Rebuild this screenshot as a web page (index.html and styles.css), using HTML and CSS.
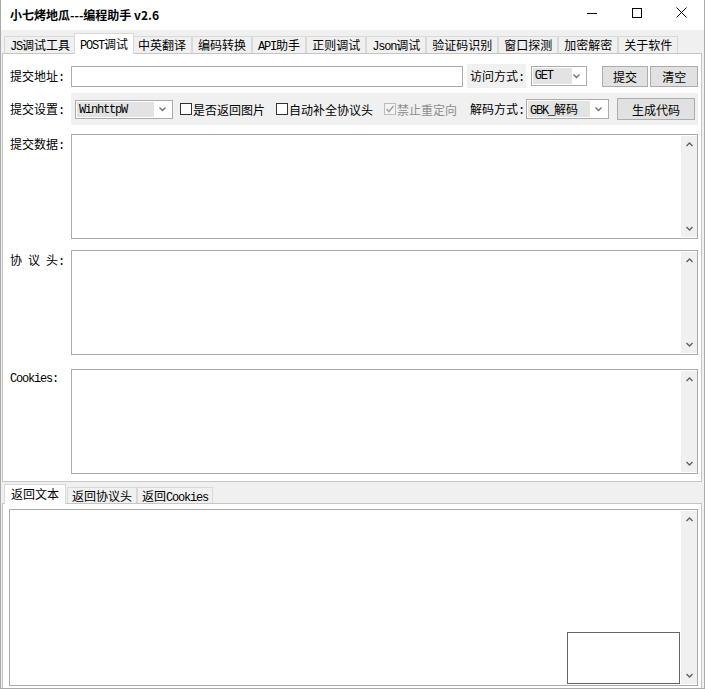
FILE: index.html
```html
<!DOCTYPE html>
<html lang="zh-CN">
<head>
    <meta charset="UTF-8">
    <title>小七烤地瓜---编程助手 v2.6</title>
    <link rel="stylesheet" href="styles.css">
</head>
<body>
<div class="window">
    <div class="titlebar">
        <div class="title">小七烤地瓜---编程助手 v2.6</div>
        <div class="controls">
            <div class="ctl"><svg width="10" height="10"><line x1="0" y1="5.5" x2="10" y2="5.5" stroke="#000"/></svg></div>
            <div class="ctl"><svg width="10" height="10"><rect x="0.5" y="0.5" width="9" height="9" fill="none" stroke="#000"/></svg></div>
            <div class="ctl"><svg width="11" height="11"><path d="M0.5 0.5 L10.5 10.5 M10.5 0.5 L0.5 10.5" stroke="#000"/></svg></div>
        </div>
    </div>

    <div class="tabs">
        <div class="tab"><span class="en">JS</span>调试工具</div>
        <div class="tab on"><span class="en">POST</span>调试</div>
        <div class="tab">中英翻译</div>
        <div class="tab">编码转换</div>
        <div class="tab"><span class="en">API</span>助手</div>
        <div class="tab">正则调试</div>
        <div class="tab"><span class="en">Json</span>调试</div>
        <div class="tab">验证码识别</div>
        <div class="tab">窗口探测</div>
        <div class="tab">加密解密</div>
        <div class="tab">关于软件</div>
    </div>

    <div class="panel main">
        <div class="row url-row">
            <div class="lbl">提交地址<span class="en">:</span></div>
            <div class="input url"></div>
            <div class="gray-lbl">访问方式<span class="en">:</span></div>
            <div class="combo c-get">
                <div class="val en">GET</div>
                <svg class="arr" width="7" height="5"><polyline points="0.5,0.5 3.5,3.5 6.5,0.5" fill="none" stroke="#707070" stroke-width="1.4"/></svg>
            </div>
            <button class="btn b-submit">提交</button>
            <button class="btn b-clear">清空</button>
        </div>

        <div class="row set-row">
            <div class="lbl">提交设置<span class="en">:</span></div>
            <div class="band">
                <div class="combo c-http">
                    <div class="val en">WinhttpW</div>
                    <svg class="arr" width="7" height="5"><polyline points="0.5,0.5 3.5,3.5 6.5,0.5" fill="none" stroke="#707070" stroke-width="1.4"/></svg>
                </div>
                <label class="chk c1"><span class="box"></span>是否返回图片</label>
                <label class="chk c2"><span class="box"></span>自动补全协议头</label>
                <label class="chk c3 off">
                    <span class="box"><svg width="10" height="10"><polyline points="1.5,5 4,7.5 8.5,2" fill="none" stroke="#a6a6a6" stroke-width="1.6"/></svg></span>禁止重定向
                </label>
                <div class="dec-lbl">解码方式<span class="en">:</span></div>
                <div class="combo c-gbk">
                    <div class="val"><span class="en">GBK_</span>解码</div>
                    <svg class="arr" width="7" height="5"><polyline points="0.5,0.5 3.5,3.5 6.5,0.5" fill="none" stroke="#707070" stroke-width="1.4"/></svg>
                </div>
                <button class="btn b-gen">生成代码</button>
            </div>
        </div>

        <div class="field f-data">
            <div class="lbl">提交数据<span class="en">:</span></div>
            <div class="memo">
                <div class="sb">
                    <svg width="7" height="5"><polyline points="0.5,4 3.5,1 6.5,4" fill="none" stroke="#606060" stroke-width="1.4"/></svg>
                    <svg width="7" height="5"><polyline points="0.5,1 3.5,4 6.5,1" fill="none" stroke="#606060" stroke-width="1.4"/></svg>
                </div>
            </div>
        </div>

        <div class="field f-head">
            <div class="lbl">协<span class="en"> </span>议<span class="en"> </span>头<span class="en">:</span></div>
            <div class="memo">
                <div class="sb">
                    <svg width="7" height="5"><polyline points="0.5,4 3.5,1 6.5,4" fill="none" stroke="#606060" stroke-width="1.4"/></svg>
                    <svg width="7" height="5"><polyline points="0.5,1 3.5,4 6.5,1" fill="none" stroke="#606060" stroke-width="1.4"/></svg>
                </div>
            </div>
        </div>

        <div class="field f-cookie">
            <div class="lbl en">Cookies:</div>
            <div class="memo">
                <div class="sb">
                    <svg width="7" height="5"><polyline points="0.5,4 3.5,1 6.5,4" fill="none" stroke="#606060" stroke-width="1.4"/></svg>
                    <svg width="7" height="5"><polyline points="0.5,1 3.5,4 6.5,1" fill="none" stroke="#606060" stroke-width="1.4"/></svg>
                </div>
            </div>
        </div>
    </div>

    <div class="tabs result-tabs">
        <div class="tab on">返回文本</div>
        <div class="tab">返回协议头</div>
        <div class="tab">返回<span class="en">Cookies</span></div>
    </div>

    <div class="panel result">
        <div class="memo big">
            <div class="sb">
                <svg width="7" height="5"><polyline points="0.5,4 3.5,1 6.5,4" fill="none" stroke="#606060" stroke-width="1.4"/></svg>
                <svg width="7" height="5"><polyline points="0.5,1 3.5,4 6.5,1" fill="none" stroke="#606060" stroke-width="1.4"/></svg>
            </div>
        </div>
        <div class="img-box"></div>
    </div>
</div>
</body>
</html>
```

FILE: styles.css
```css
body {
    margin: 0;
    font-family: "Noto Sans CJK SC", sans-serif;
    font-size: 12px;
    color: #000;
    background: #fff;
}
.en {
    font-family: "Liberation Mono", monospace;
    font-size: 12px;
    letter-spacing: -1.2px;
}
.window {
    width: 705px;
    height: 689px;
    box-sizing: border-box;
    border-left: 1px solid #aaaaaa;
    border-right: 1px solid #aaaaaa;
    border-bottom: 1px solid #aaaaaa;
    background: #f0f0f0;
    display: flex;
    flex-direction: column;
    overflow: hidden;
}

/* title bar */
.titlebar {
    height: 30px;
    background: #fff;
    display: flex;
    align-items: flex-start;
}
.title {
    padding-left: 9px;
    line-height: 29px;
    font-weight: bold;
    font-size: 12px;
}
.controls {
    margin-left: auto;
    display: flex;
}
.ctl {
    width: 45px;
    height: 25px;
    display: flex;
    align-items: center;
    justify-content: center;
}

/* tabs */
.tabs {
    display: flex;
    align-items: flex-end;
    height: 20px;
    margin-top: 3px;
    padding-left: 3px;
}
.tab {
    height: 17px;
    box-sizing: border-box;
    padding: 0 5px;
    border: 1px solid #d9d9d9;
    border-bottom: none;
    line-height: 16px;
    white-space: nowrap;
}
.tab.on {
    height: 21px;
    margin: 0 -2px -1px;
    background: #fff;
    line-height: 19px;
    position: relative;
    z-index: 1;
}
.result-tabs {
    height: 19px;
    margin-top: 2px;
}
.result-tabs .tab {
    height: 16px;
    padding: 0 4px;
    line-height: 15px;
}
.result-tabs .tab.on {
    height: 20px;
    padding: 0 6px;
    margin: 0 1px -1px 0;
    line-height: 18px;
}

/* panels */
.panel {
    background: #fff;
    border: 1px solid #c6c6c6;
    margin: 0 2px 0 1px;
    box-sizing: border-box;
    position: relative;
}
.main {
    height: 429px;
    padding: 0 3px 0 7px;
}
.result {
    flex: 1;
    padding: 5px 0 0 6px;
    border-bottom: none;
}

.row {
    display: flex;
    align-items: center;
}
.lbl {
    width: 61px;
    flex: none;
    white-space: nowrap;
}
.url-row {
    height: 24px;
    margin-top: 10px;
}
.set-row {
    height: 32px;
    margin-top: 5px;
}
.input {
    height: 21px;
    box-sizing: border-box;
    border: 1px solid #ababab;
    background: #fff;
}
.url {
    width: 395px;
}
.gray-lbl {
    margin-left: 4px;
    width: 59px;
    height: 24px;
    box-sizing: border-box;
    padding-left: 3px;
    line-height: 24px;
    background: #f0f0f0;
}

.combo {
    height: 20px;
    box-sizing: border-box;
    border: 1px solid #acacac;
    padding: 1px;
    background: #fff;
    display: flex;
    align-items: center;
    flex: none;
}
.combo .val {
    height: 100%;
    background: #e3e3e3;
    padding-left: 2px;
    box-sizing: border-box;
    line-height: 16px;
    white-space: nowrap;
}
.combo .arr {
    margin-left: auto;
    margin-right: 5px;
}
.c-get {
    margin-left: 5px;
    width: 56px;
}
.c-get .val {
    width: 39px;
}
.c-http {
    margin-left: 4px;
    width: 98px;
    height: 19px;
}
.c-http .val {
    width: 77px;
}
.c-gbk {
    margin-left: 2px;
    width: 83px;
}
.c-gbk .val {
    width: 62px;
}

.btn {
    height: 21px;
    box-sizing: border-box;
    border: 1px solid #adadad;
    background: #e1e1e1;
    font-family: "Noto Sans CJK SC", sans-serif;
    font-size: 12px;
    padding: 0;
    color: #000;
}
.b-submit {
    margin-left: 15px;
    width: 47px;
}
.b-clear {
    margin-left: 2px;
    width: 48px;
}
.b-gen {
    margin-left: 8px;
    width: 78px;
    height: 22px;
}

.band {
    width: 628px;
    height: 32px;
    background: #f0f0f0;
    display: flex;
    align-items: center;
}
.chk {
    display: flex;
    align-items: center;
    white-space: nowrap;
}
.chk .box {
    width: 12px;
    height: 12px;
    box-sizing: border-box;
    border: 1px solid #333;
    background: #fff;
    margin-right: 1px;
    display: flex;
    align-items: center;
    justify-content: center;
}
.chk.off {
    color: #8d8d8d;
}
.chk.off .box {
    border-color: #bcbcbc;
    background: #f4f4f4;
}
.c1 {
    margin-left: 7px;
}
.c2,
.c3 {
    margin-left: 11px;
}
.dec-lbl {
    margin-left: 13px;
    white-space: nowrap;
}

/* memo boxes */
.field {
    display: flex;
}
.field .lbl {
    line-height: 16px;
    padding-top: 2px;
}
.f-data {
    margin-top: 9px;
}
.f-head {
    margin-top: 11px;
}
.f-cookie {
    margin-top: 14px;
}
.field .memo {
    width: 627px;
    height: 105px;
}
.memo {
    box-sizing: border-box;
    border: 1px solid #ababab;
    background: #fff;
    padding: 1px 0;
    display: flex;
    justify-content: flex-end;
}
.sb {
    width: 16px;
    background: #f0f0f0;
    display: flex;
    flex-direction: column;
    justify-content: space-between;
    align-items: center;
    padding: 6px 0;
}
.memo.big {
    width: 689px;
    height: 177px;
}

/* picture frame sitting over the result box */
.img-box {
    position: absolute;
    left: 564px;
    top: 128px;
    width: 113px;
    height: 52px;
    box-sizing: border-box;
    border: 1px solid #646464;
    background: #fff;
}
```
